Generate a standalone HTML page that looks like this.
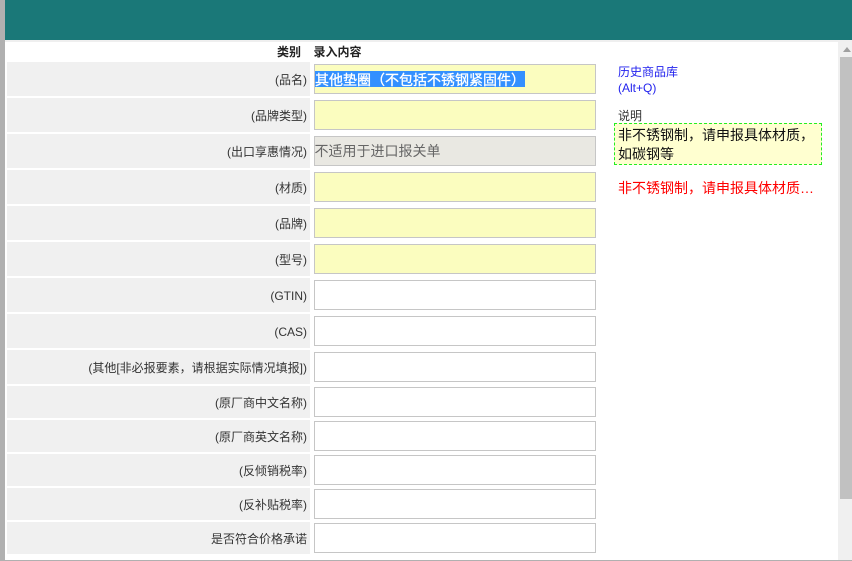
<!DOCTYPE html>
<html lang="zh">
<head>
<meta charset="utf-8">
<style>
html,body{margin:0;padding:0;width:852px;height:561px;overflow:hidden;background:#fff}
body{position:relative;font-family:"Liberation Sans","Noto Sans CJK SC",sans-serif;font-size:12px;color:#333}
div{position:absolute;box-sizing:border-box;white-space:nowrap}
.r{left:7px;width:303px;background:#f0f0f0;text-align:right;padding:1px 3px 0 0}
.i{left:314px;width:282px;border:1px solid #c6c6c6;background:#fff;font-size:14px;color:#333}
.y{background:#fbfdbf}
.g{background:#e9e8e2;color:#666}
</style>
</head>
<body>
<div style="left:0;top:0;width:5px;height:561px;background:#b0b0b0"></div>
<div style="left:5px;top:0;width:847px;height:40px;background:#1a7878"></div>
<div style="left:5px;top:40px;width:847px;height:2px;background:#efefef"></div>
<div style="left:5px;top:560px;width:847px;height:1px;background:#b0b0b0"></div>

<div style="left:200px;width:101px;top:43px;height:18px;line-height:18px;text-align:right;font-weight:bold;color:#222">类别</div>
<div style="left:313.5px;top:43px;height:18px;line-height:18px;font-weight:bold;color:#222">录入内容</div>

<div class="r" style="top:62px;height:34px;line-height:34px">(品名)</div>
<div class="r" style="top:98px;height:34px;line-height:34px">(品牌类型)</div>
<div class="r" style="top:134px;height:34px;line-height:34px">(出口享惠情况)</div>
<div class="r" style="top:170px;height:34px;line-height:34px">(材质)</div>
<div class="r" style="top:206px;height:34px;line-height:34px">(品牌)</div>
<div class="r" style="top:242px;height:34px;line-height:34px">(型号)</div>
<div class="r" style="top:278px;height:34px;line-height:34px">(GTIN)</div>
<div class="r" style="top:314px;height:34px;line-height:34px">(CAS)</div>
<div class="r" style="top:350px;height:34px;line-height:34px">(其他[非必报要素，请根据实际情况填报])</div>
<div class="r" style="top:386px;height:32px;line-height:32px">(原厂商中文名称)</div>
<div class="r" style="top:420px;height:32px;line-height:32px">(原厂商英文名称)</div>
<div class="r" style="top:454px;height:32px;line-height:32px">(反倾销税率)</div>
<div class="r" style="top:488px;height:32px;line-height:32px">(反补贴税率)</div>
<div class="r" style="top:522px;height:32px;line-height:32px">是否符合价格承诺</div>

<div class="i y" style="top:64px;height:30px"></div>
<div style="left:315px;top:71px;width:210px;height:16px;background:#3390ff;color:#fff;font-size:14px;line-height:16px;padding-top:1px;-webkit-text-stroke:.3px #fff">其他垫圈（不包括不锈钢紧固件）</div>
<div class="i y" style="top:100px;height:30px"></div>
<div class="i g" style="top:136px;height:30px;line-height:28px;text-indent:-.5px">不适用于进口报关单</div>
<div class="i y" style="top:172px;height:30px"></div>
<div class="i y" style="top:208px;height:30px"></div>
<div class="i y" style="top:244px;height:30px"></div>
<div class="i" style="top:280px;height:30px"></div>
<div class="i" style="top:316px;height:30px"></div>
<div class="i" style="top:352px;height:30px"></div>
<div class="i" style="top:387px;height:30px"></div>
<div class="i" style="top:421px;height:30px"></div>
<div class="i" style="top:455px;height:30px"></div>
<div class="i" style="top:489px;height:30px"></div>
<div class="i" style="top:523px;height:30px"></div>

<div style="left:618px;top:64px;line-height:16px;color:#2222ee">历史商品库<br>(Alt+Q)</div>
<div style="left:618px;top:108px;line-height:16px;color:#333">说明</div>
<div style="left:614px;top:123px;width:208px;height:42px;border:1px dashed #22ee22;background:#ffffd0;color:#111;font-size:14px;line-height:19px;padding:2px 0 0 3px">非不锈钢制，请申报具体材质，<br>如碳钢等</div>
<div style="left:618px;top:179px;line-height:18px;font-size:14px;color:#f00">非不锈钢制，请申报具体材质…</div>

<div style="left:838px;top:42px;width:14px;height:518px;background:#f0f0f0"></div>
<div style="left:840px;top:57px;width:12px;height:442px;background:#c1c1c1"></div>
<div style="left:843px;top:47px;width:0;height:0;border-left:4px solid transparent;border-right:4px solid transparent;border-bottom:5px solid #a0a0a0"></div>
</body>
</html>
